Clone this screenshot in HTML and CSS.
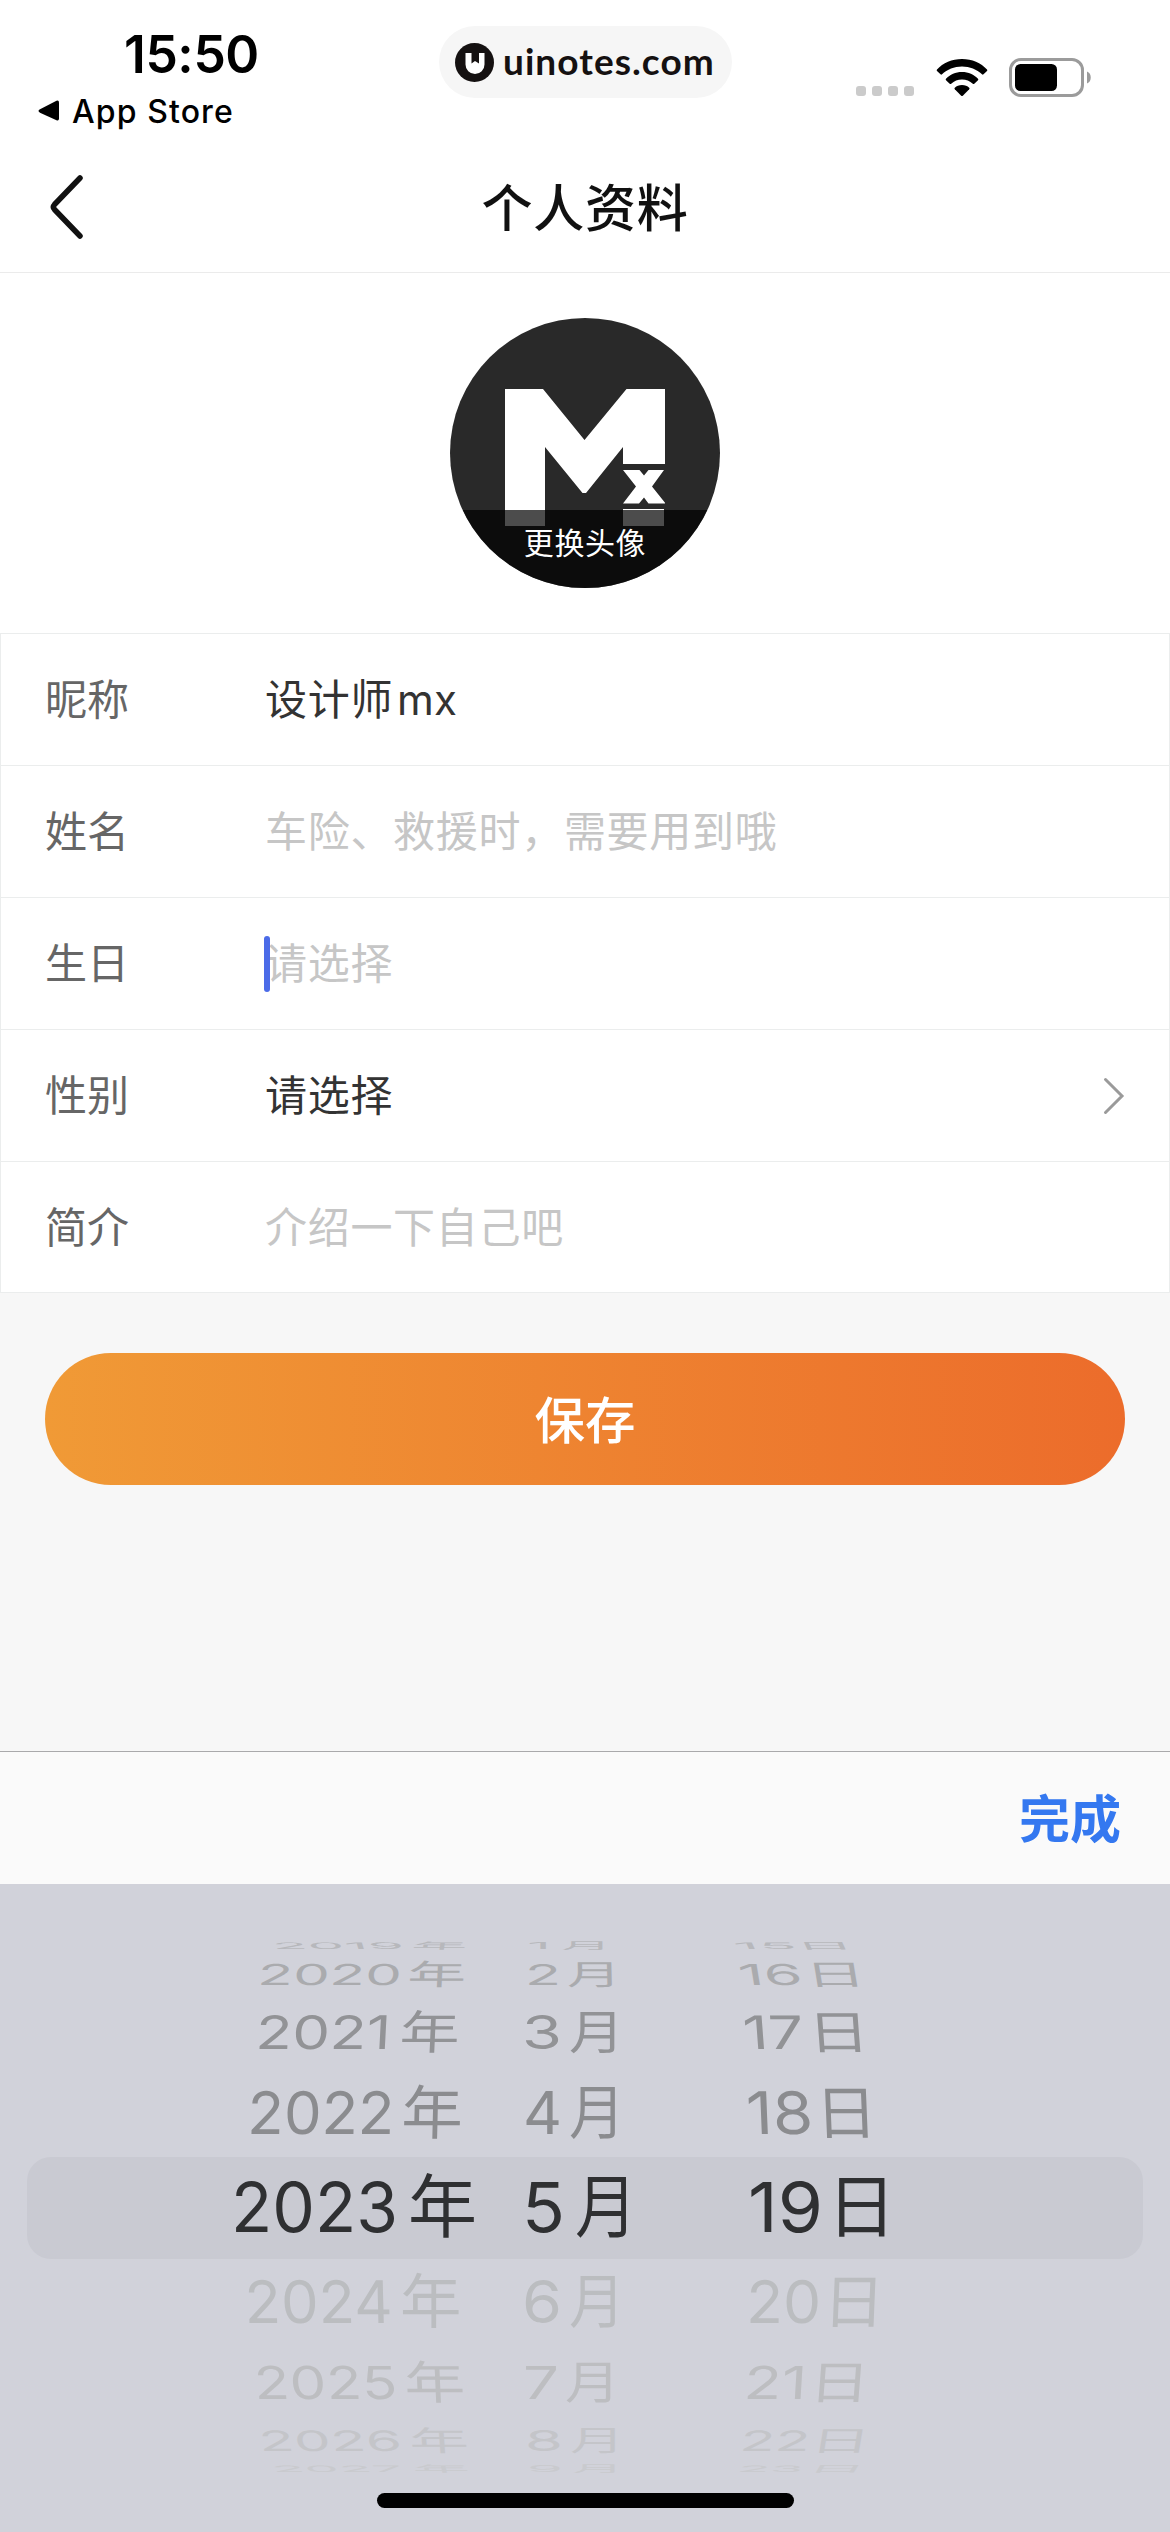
FILE: index.html
```html
<!DOCTYPE html>
<html lang="zh-CN">
<head>
<meta charset="utf-8">
<title>个人资料</title>
<link rel="stylesheet" href="styles.css">
</head>
<body>
<div class="screen">
  <header class="status">
    <div class="status-left">
      <div class="clock">15:50</div>
      <div class="back-app">
        <svg width="22" height="22" viewBox="0 0 22 22"><path d="M2 9.3 18.500 .8Q21 0 21 2.500V18.500Q21 21 18.500 20.200L2 12.700Q-1 11 2 9.300Z"/></svg>
        <span>App Store</span>
      </div>
    </div>
    <div class="pill">
      <svg width="39" height="39" viewBox="0 0 39 39"><circle cx="19.500" cy="19.500" r="19.500" fill="#151111"/><path fill="#fff" d="M10.500 10H16.500V20.500L20 18 24 20.500V10H29.500V21.500A9.500 9.500 0 0 1 10.500 21.500Z"/></svg>
      <span>uinotes.com</span>
    </div>
    <div class="status-right">
      <div class="dots"><i></i><i></i><i></i><i></i></div>
      <svg class="wifi" width="52" height="38" viewBox="0 0 52 38"><path d="M26 0C36 0 45 4 51 10.500Q51.700 11.200 51 12L47.500 15.300Q46.700 16 46 15.300C40.700 10.300 33.800 7.500 26 7.500S11.300 10.300 6 15.300Q5.300 16 4.500 15.300L1 12Q.3 11.200 1 10.500C7 4 16 0 26 0Z"/><path d="M26 13C32.500 13 38 15.500 42 19.700Q42.700 20.500 42 21.200L38.300 24.700Q37.500 25.300 36.800 24.700C33.900 22 30.200 20.500 26 20.500S18.100 22 15.200 24.700Q14.500 25.300 13.700 24.700L10 21.200Q9.300 20.500 10 19.700C14 15.500 19.500 13 26 13Z"/><path d="M26 26C29 26 31.400 27 33.200 28.700Q34 29.500 33.200 30.300L26.800 36.700Q26 37.500 25.200 36.700L18.800 30.300Q18 29.500 18.800 28.700C20.600 27 23 26 26 26Z"/></svg>
      <svg class="battery" width="83" height="39" viewBox="0 0 83 39"><rect x="1.500" y="1.500" width="72" height="36" rx="10.500" fill="none" stroke="#9b9b9b" stroke-width="3"/><rect x="6" y="6" width="42" height="27" rx="5.500"/><path d="M78 13.500C83 15 83 24 78 25.500Z" fill="#9b9b9b"/></svg>
    </div>
  </header>

  <nav class="nav">
    <svg class="nav-back" width="34" height="64" viewBox="0 0 34 64"><path d="M30 3 4.500 29.500Q2.200 32 4.500 34.500L30 61" fill="none" stroke="#111" stroke-width="5.500" stroke-linecap="round"/></svg>
    <h1>个人资料</h1>
  </nav>

  <section class="avatar-area">
    <div class="avatar">
      <svg class="avatar-logo" width="160" height="138" viewBox="0 0 160 138"><path fill="#fff" d="M0 0H38L79.500 51 121.500 0H160V75H118V58L81 104H77.500L40 58V137H0ZM118 81H134.500L139 86.500 143.500 81H159L147 97.500 160.500 114.500H143.500L139 108.500 134 114.500H118L131 97.500ZM118 120H159V137H118Z"/></svg>
      <div class="avatar-tip">更换头像</div>
    </div>
  </section>

  <section class="form">
    <div class="row"><label>昵称</label><div class="value">设计师<span class="latin">mx</span></div></div>
    <div class="row"><label>姓名</label><div class="value hint">车险、救援时，需要用到哦</div></div>
    <div class="row"><label>生日</label><div class="value hint focus">请选择</div></div>
    <div class="row"><label>性别</label><div class="value">请选择</div>
      <svg width="22" height="38" viewBox="0 0 22 38"><path d="M2.500 2.500 19 19 2.500 35.500" fill="none" stroke="#9a9a9a" stroke-width="3" stroke-linecap="round"/></svg></div>
    <div class="row"><label>简介</label><div class="value hint">介绍一下自己吧</div></div>
  </section>

  <main class="actions"><button class="save">保存</button></main>

  <div class="toolbar"><span>完成</span></div>

  <div class="picker">
    <svg class="wheel" width="1170" height="648" viewBox="0 1884 1170 648">
      <rect x="27" y="2157" width="1116" height="102" rx="24" fill="#c9cad2"/>
      <g fill="#b7b8bc">
        <text transform="matrix(1 0 .04 .13 273 1949)" textLength="132" lengthAdjust="spacingAndGlyphs">2019</text><text class="cjk" transform="matrix(.81 0 -.02 .13 411 1949)">年</text>
        <text transform="matrix(1 0 0 .13 527 1949)" textLength="24" lengthAdjust="spacingAndGlyphs">1</text><text class="cjk" transform="matrix(.73 0 0 .13 561 1949)">月</text>
        <text transform="matrix(1 0 .06 .13 735 1949)" textLength="63" lengthAdjust="spacingAndGlyphs">15</text><text class="cjk" transform="matrix(.84 0 .06 .13 797 1949)">日</text>
      </g>
      <g fill="#aaabae">
        <text transform="matrix(1 0 -.03 .42 257 1985)" textLength="144" lengthAdjust="spacingAndGlyphs">2020</text><text class="cjk" transform="matrix(.85 0 -.02 .42 407 1985)">年</text>
        <text transform="matrix(1 0 0 .42 525 1985)" textLength="36" lengthAdjust="spacingAndGlyphs">2</text><text class="cjk" transform="matrix(.79 0 .01 .42 567 1985)">月</text>
        <text transform="matrix(1 0 .068 .42 740 1985)" textLength="64" lengthAdjust="spacingAndGlyphs">16</text><text class="cjk" transform="matrix(.87 0 .068 .42 807 1985)">日</text>
      </g>
      <g fill="#929396">
        <text transform="matrix(1 0 -.035 .67 255 2049)" textLength="135" lengthAdjust="spacingAndGlyphs">2021</text><text class="cjk" transform="matrix(.87 0 -.03 .67 399 2049)">年</text>
        <text transform="matrix(1 0 0 .67 522 2049)" textLength="40" lengthAdjust="spacingAndGlyphs">3</text><text class="cjk" transform="matrix(.8 0 0 .67 569 2049)">月</text>
        <text transform="matrix(1 0 .05 .67 744 2049)" textLength="61" lengthAdjust="spacingAndGlyphs">17</text><text class="cjk" transform="matrix(.89 0 .05 .67 809 2049)">日</text>
      </g>
      <g fill="#8b8c8f">
        <text transform="matrix(1 0 -.02 .85 247 2134)" textLength="147" lengthAdjust="spacingAndGlyphs">2022</text><text class="cjk" transform="matrix(.89 0 -.02 .85 401 2134)">年</text>
        <text transform="matrix(1 0 0 .85 523 2134)" textLength="39" lengthAdjust="spacingAndGlyphs">4</text><text class="cjk" transform="matrix(.81 0 0 .85 569 2134)">月</text>
        <text transform="matrix(1 0 .034 .85 747 2134)" textLength="67" lengthAdjust="spacingAndGlyphs">18</text><text class="cjk" transform="matrix(.9 0 .034 .85 816 2134)">日</text>
      </g>
      <g fill="#2f3032">
        <text transform="translate(231 2232)" textLength="167" lengthAdjust="spacingAndGlyphs">2023</text><text class="cjk" transform="translate(408 2232)">年</text>
        <text transform="translate(522 2232)" textLength="43" lengthAdjust="spacingAndGlyphs">5</text><text class="cjk" transform="matrix(.9 0 0 1 575 2232)">月</text>
        <text transform="translate(748 2232)" textLength="75" lengthAdjust="spacingAndGlyphs">19</text><text class="cjk" transform="translate(827 2232)">日</text>
      </g>
      <g fill="#bbbdc0">
        <text transform="matrix(1 0 .02 .85 245 2322.500)" textLength="148" lengthAdjust="spacingAndGlyphs">2024</text><text class="cjk" transform="matrix(.89 0 0 .85 400 2322.500)">年</text>
        <text transform="matrix(1 0 0 .85 522 2322.500)" textLength="40" lengthAdjust="spacingAndGlyphs">6</text><text class="cjk" transform="matrix(.81 0 0 .85 569 2322.500)">月</text>
        <text transform="matrix(1 0 -.01 .85 746 2322.500)" textLength="75" lengthAdjust="spacingAndGlyphs">20</text><text class="cjk" transform="matrix(.9 0 -.034 .85 822 2322.500)">日</text>
      </g>
      <g fill="#bdbec1">
        <text transform="matrix(1 0 .04 .66 255 2399)" textLength="143" lengthAdjust="spacingAndGlyphs">2025</text><text class="cjk" transform="matrix(.88 0 .03 .66 405 2399)">年</text>
        <text transform="matrix(1 0 0 .66 523 2399)" textLength="36" lengthAdjust="spacingAndGlyphs">7</text><text class="cjk" transform="matrix(.8 0 0 .66 565 2399)">月</text>
        <text transform="matrix(1 0 -.04 .66 743 2399)" textLength="63" lengthAdjust="spacingAndGlyphs">21</text><text class="cjk" transform="matrix(.88 0 -.05 .66 808 2399)">日</text>
      </g>
      <g fill="#c4c5c9">
        <text transform="matrix(1 0 .05 .41 260 2450.500)" textLength="143" lengthAdjust="spacingAndGlyphs">2026</text><text class="cjk" transform="matrix(.86 0 .03 .41 410 2450.500)">年</text>
        <text transform="matrix(1 0 0 .41 525 2450.500)" textLength="38" lengthAdjust="spacingAndGlyphs">8</text><text class="cjk" transform="matrix(.79 0 0 .41 570 2450.500)">月</text>
        <text transform="matrix(1 0 -.05 .41 739 2450.500)" textLength="70" lengthAdjust="spacingAndGlyphs">22</text><text class="cjk" transform="matrix(.87 0 -.068 .41 809 2450.500)">日</text>
      </g>
      <g fill="#c9cace">
        <text transform="matrix(1 0 .06 .13 273 2472)" textLength="131" lengthAdjust="spacingAndGlyphs">2027</text><text class="cjk" transform="matrix(.83 0 .03 .13 413 2472)">年</text>
        <text transform="matrix(1 0 0 .13 527 2472)" textLength="36" lengthAdjust="spacingAndGlyphs">9</text><text class="cjk" transform="matrix(.75 0 0 .13 572 2472)">月</text>
        <text transform="matrix(1 0 -.06 .13 736 2472)" textLength="66" lengthAdjust="spacingAndGlyphs">23</text><text class="cjk" transform="matrix(.84 0 -.08 .13 806 2472)">日</text>
      </g>
      <rect x="377" y="2493" width="417" height="15" rx="7.500" fill="#000"/>
    </svg>
  </div>
</div>
</body>
</html>
```
FILE: styles.css
```css
* { box-sizing: border-box; }
body { margin: 0; font-family: Inter, "Noto Sans CJK SC", sans-serif; background: #f7f7f7; }
svg { display: block; flex: none; }
.screen { width: 1170px; height: 2532px; display: flex; flex-direction: column; overflow: hidden; }

.status { height: 141px; background: #fff; display: flex; align-items: flex-start; }
.status-left { width: 439px; padding: 23px 0 0 38px; }
.clock { margin-left: 86px; font-size: 51.5px; line-height: 62px; font-weight: 600; letter-spacing: -.4px; }
.back-app { display: flex; align-items: center; gap: 12px; margin-top: 6px; height: 40px; font-size: 32px; font-weight: 500; letter-spacing: 1.1px; }
.pill { width: 293px; height: 72px; margin-top: 26px; padding-left: 16px; border-radius: 36px; background: #f6f6f6; display: flex; align-items: center; gap: 9px; color: #151111; font: 700 37px/72px Lato, sans-serif; letter-spacing: 1.05px; }
.pill span { margin-top: -2px; }
.status-right { display: flex; align-items: flex-start; padding-left: 124px; }
.dots { display: flex; gap: 6px; margin-top: 86px; }
.dots i { width: 10px; height: 10px; border-radius: 3px; background: #cbcbcb; }
.wifi { margin: 59px 0 0 22px; }
.battery { margin: 58px 0 0 21px; }

.nav { height: 132px; display: flex; align-items: center; background: #fff; border-bottom: 1px solid #ebebeb; padding-left: 50px; }
.nav h1 { flex: 1; margin: 4px 84px 0 0; text-align: center; font-size: 51px; line-height: 60px; font-weight: 500; letter-spacing: .8px; color: #111; }

.avatar-area { height: 360px; background: #fff; display: flex; justify-content: center; padding-top: 45px; }
.avatar { width: 270px; height: 270px; border-radius: 50%; overflow: hidden; background: #292929; padding: 71px 0 0 55px; }
.avatar-logo { margin-bottom: -17px; }
.avatar-tip { position: relative; width: 270px; height: 78px; margin-left: -55px; background: rgba(0,0,0,.7); color: #fff; text-align: center; font-size: 30px; line-height: 67px; letter-spacing: .6px; }

.form { height: 660px; background: #fff; border: 1px solid #ebeded; }
.row { height: 132px; display: flex; align-items: center; padding: 0 44px; border-bottom: 1px solid #ebeded; font-size: 42px; line-height: 60px; }
.row:last-child { border-bottom: 0; }
.row label { width: 220px; color: #666; }
.value { flex: 1; color: #333; letter-spacing: .7px; }
.hint { color: #c6c6c6; }
.latin { margin-left: 4px; letter-spacing: 0; }
.focus { position: relative; }
.focus::before { content: ""; position: absolute; left: -1px; top: 2px; width: 6px; height: 56px; border-radius: 3px; background: #4b6be8; }

.actions { flex: 1; padding: 60px 45px 0; }
.save { width: 100%; height: 132px; border: 0; border-radius: 66px; background: linear-gradient(90deg, #f09a36, #ec6c2b); color: #fff; font: 500 50.5px/128px "Noto Sans CJK SC", sans-serif; padding: 0 0 4px; display: block; }

.toolbar { height: 133px; border-top: 1px solid #a9a9ab; background: #fafafa; display: flex; align-items: center; justify-content: flex-end; padding: 0 49px 4px 0; color: #3478f0; font-size: 51px; font-weight: 700; }
.picker { height: 648px; background: #d1d2da; }
.wheel text { font-family: Inter, sans-serif; font-size: 69px; }
.wheel .cjk { font-family: "Noto Sans CJK SC", sans-serif; }
```
